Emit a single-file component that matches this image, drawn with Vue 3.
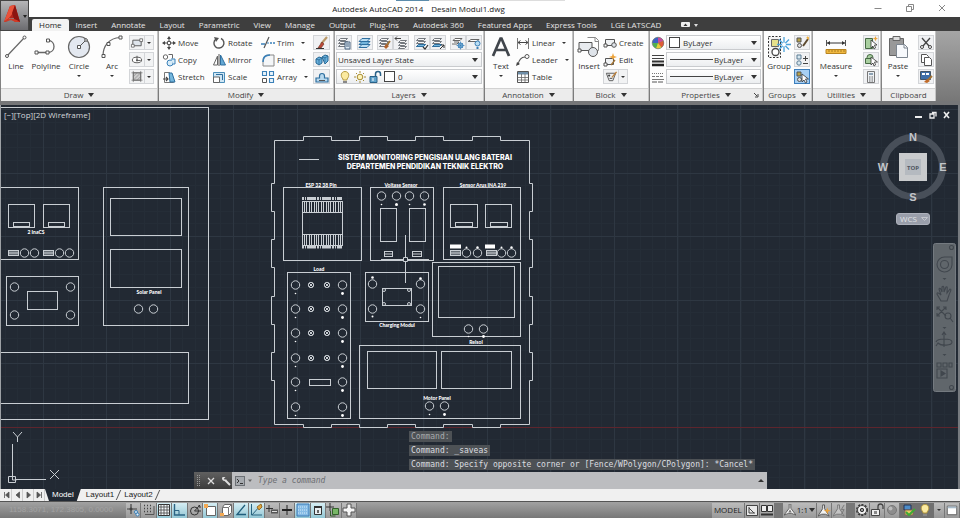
<script setup>
import { ref } from 'vue'

const menu = ['Insert', 'Annotate', 'Layout', 'Parametric', 'View', 'Manage', 'Output', 'Plug-ins', 'Autodesk 360', 'Featured Apps', 'Express Tools', 'LGE LATSCAD']

const stack = '<path d="M3.500 2.500h7l-2 2h-7zM3.500 5.500h7l-2 2h-7zM3.500 8.500h7l-2 2h-7z" fill="#f7f7f7" stroke="#646a70" stroke-width=".9"/>'
const group = '<path d="M2 2h4v4H2z" fill="#b8a24a" stroke="#555"/><circle cx="4.500" cy="9.500" r="2" fill="#ddd" stroke="#555"/>'

const icons = {
  line: '<path d="M3 21L20 3" stroke="#666" stroke-width="1.200"/><g fill="#fff" stroke="#555"><circle cx="3" cy="21" r="1.500"/><circle cx="20.500" cy="2.500" r="1.500"/></g>',
  polyline: '<path d="M2 17.500h12c8 0 8-12 0-12" fill="none" stroke="#666" stroke-width="1.300"/><g fill="#fff" stroke="#555"><path d="M1 16h3v3H1zM12 16h3v3h-3zM12.500 4h3v3h-3z"/></g>',
  circle: '<circle cx="12" cy="12" r="10.500" fill="#e3e8f0" stroke="#666" stroke-width="1.200"/><path d="M12 12l6.500-6.500" stroke="#555"/><g fill="#fff" stroke="#555"><path d="M10.500 10.500h3v3h-3z"/><circle cx="19" cy="5" r="1.300"/></g>',
  arc: '<path d="M3 21C3 11 9 3 20 2.500" fill="none" stroke="#666" stroke-width="1.200"/><g fill="#fff" stroke="#555"><path d="M2 19.500h3v3H2zM7 7.500h3v3H7zM19 1h3v3h-3z"/></g>',
  rect: '<path d="M2.500 4.500h9v6h-9z" fill="#dfe5ec" stroke="#555"/><path d="M1 9h3v3H1zM10 3h3v3h-3z" fill="#fff" stroke="#555" stroke-width=".8"/>',
  ellipse: '<ellipse cx="7" cy="7.500" rx="5" ry="3" fill="#fff" stroke="#555"/><path d="M7 3v5h4" fill="none" stroke="#555"/><path d="M6 7h2v2H6z" fill="#555"/>',
  hatch: '<path d="M3 3h8v8H3z" fill="#ccc" stroke="#777"/><path d="M3 7l4-4M3 11l8-8M7 11l4-4" stroke="#888" stroke-width=".7"/><path d="M1 3h12M3 1v12M1 11h12M11 1v12" stroke="#666" stroke-width=".7"/>',
  move: '<path d="M7 0l2 3H5zM7 14l2-3H5zM0 7l3-2v4zM14 7l-3-2v4z" fill="#444"/><path d="M7 3v8M3 7h8" stroke="#444"/><path d="M5.500 5.500h3v3h-3z" fill="#fff" stroke="#555"/>',
  rotate: '<path d="M4 3a5 5 0 1 0 5-.5" fill="none" stroke="#555" stroke-width="1.400"/><path d="M2 1l5 1-3 4z" fill="#555"/>',
  trim: '<path d="M0 8h4M9 7h2M12 7h2" stroke="#3a80b8" stroke-width="1.300"/><path d="M3 12L8 1" stroke="#555" stroke-width="1.200"/><path d="M6 7h2" stroke="#3a80b8"/>',
  copy: '<g fill="#fff" stroke="#666"><circle cx="3.500" cy="4" r="2.200"/><path d="M6.500 1.500h4v4"/></g><circle cx="8" cy="10" r="3" fill="#d8ecf8" stroke="#3a80b8"/><path d="M9 6h4v5h-2" fill="#d8ecf8" stroke="#3a80b8"/>',
  mirror: '<path d="M5.500 3v9h-4z" fill="#fff" stroke="#666"/><path d="M8.500 2v10h5z" fill="#64a8d4" stroke="#2e6f9f"/><path d="M7 1v12" stroke="#555"/>',
  fillet: '<path d="M2 13V8c0-4 2-6 6-6h5v11z" fill="#f4f6f8" stroke="#888"/><path d="M2 9c0-5 2-7 7-7" fill="none" stroke="#3a80b8" stroke-width="1.600"/>',
  stretch: '<path d="M2.500 2.500h5l4 10h-9z" fill="#fff" stroke="#777"/><path d="M7 3h3l3 9H8z" fill="#75b6dc" stroke="#2e6f9f"/><path d="M1 9h5M4 7l2 2-2 2" fill="none" stroke="#444" stroke-width="1.100"/>',
  scale: '<path d="M1.500 2.500h11v10h-11z" fill="#cfe6f4" stroke="#4a8db8"/><path d="M1.500 7h6v5.500h-6z" fill="#fff" stroke="#666"/><path d="M4 4.500h6.500V10" fill="none" stroke="#2e6f9f"/>',
  array: '<g fill="#e8f3fa" stroke="#3a80b8" stroke-width="1.100"><path d="M1.500 1.500h4v4h-4zM8.500 1.500h4v4h-4zM8.500 8.500h4v4h-4z"/></g><path d="M1.500 8.500h4v4h-4z" fill="#fff" stroke="#555"/>',
  erase: '<path d="M12 1L6 8" stroke="#b99868" stroke-width="2.200"/><path d="M7 6l2 2-3 4H3z" fill="#bd4938" stroke="#74392c" stroke-width=".7"/><path d="M1 12.500h8" stroke="#333"/>',
  explode: '<path d="M1 6l3-2 3 1v5l-3 2-3-2zM7 4l3-2 3 1v5l-3 3z" fill="#68b0dc" stroke="#286894"/><path d="M4 6v5M10 4v5M1 6l3 1 3-2M7 4l3 1 3-2" fill="none" stroke="#286894" stroke-width=".7"/>',
  offset: '<path d="M1 12h12V8H9.500V6a2.500 2.500 0 0 0-5 0v2H1z" fill="#b9d9ee" stroke="#2e6f9f" stroke-width="1.200"/><path d="M4 10.500h6" stroke="#555"/>',
  lprops: stack + '<path d="M8 6h5v7H8z" fill="#dce8f2" stroke="#4a6480"/><path d="M9 8h3M9 10h3" stroke="#4a6480"/>',
  liso: '<path d="M4 2.500h8l-3 3H1z" fill="#bcdff3" stroke="#2e6f9f"/><path d="M4 5.500h8l-3 3H1z" fill="#75b6dc" stroke="#2e6f9f"/><path d="M4 8.500h8l-3 3H1z" fill="#bcdff3" stroke="#2e6f9f"/>',
  lmatch: stack + '<path d="M12 5L9 9" stroke="#a47434" stroke-width="1.800"/><path d="M8 8l3 2-3 3-2-2z" fill="#b0622c"/>',
  lprev: '<path d="M6.500 4.500h6l-2 2h-6zM6.500 7.500h6l-2 2h-6zM6.500 10.500h6l-2 2h-6z" fill="#f7f7f7" stroke="#646a70" stroke-width=".9"/><path d="M1 2.500h6M3 .5l-2 2 2 2" stroke="#444" fill="none"/>',
  lblue: stack + '<path d="M3.500 8.500h7l-2 2h-7z" fill="#75b6dc" stroke="#2e6f9f"/><path d="M8 11l2 2 3-4" stroke="#333" fill="none" stroke-width="1.200"/>',
  lunset: stack + '<path d="M3.500 8.500h7l-2 2h-7z" fill="#75b6dc" stroke="#2e6f9f"/><path d="M9 13l4-4M10 9h3v3" stroke="#333" fill="none"/>',
  lfreeze: '<path d="M4 2.500h7l-2 2H2zM3 6h5l-2 2H1" fill="#fff" stroke="#666"/><circle cx="9.500" cy="9.500" r="2.500" fill="#cde8f8" stroke="#3a80b8"/><path d="M9.500 5.500v8M5.500 9.500h8M7 7l5 5M12 7l-5 5" stroke="#3a80b8" stroke-width=".7"/>',
  loff: '<path d="M4 3.500h8l-2 2H1z" fill="#fff" stroke="#666"/><circle cx="10.500" cy="7.500" r="2.500" fill="#b9dcf2" stroke="#3a80b8"/><path d="M9.500 11h2v2h-2z" fill="#3a80b8"/>',
  text: '<path d="M4 21L11.500 3.500h1L20 21M7 15h10" fill="none" stroke="#41464c" stroke-width="2.700"/>',
  linear: '<path d="M1.500 2v11M12.500 2v11" stroke="#777"/><path d="M2 6.500h10M4.500 4.500l-2.500 2 2.500 2M9.500 4.500l2.500 2-2.500 2" stroke="#444" fill="none"/>',
  leader: '<path d="M2 12c1-6 3-8 7-8" fill="none" stroke="#555" stroke-width="1.200"/><path d="M0 13l1-4 3 2z" fill="#444"/><circle cx="11" cy="3.500" r="2" fill="#fff" stroke="#555"/>',
  table: '<path d="M1.500 1.500h11v11h-11z" fill="#fff" stroke="#555"/><path d="M2 2h10v2.500H2z" fill="#6e8ea8"/><path d="M1.500 7.500h11M1.500 10h11M5.500 4v8M9 4v8" stroke="#666" stroke-width=".8"/>',
  insert: '<path d="M10.500 2.500h8l3 3v10h-7" fill="#fff" stroke="#888"/><path d="M18 2.500v4h4" fill="none" stroke="#888"/><path d="M2 7.500h13v8H2z" fill="#e8ebef" stroke="#555"/><circle cx="16" cy="17" r="4.500" fill="#dfe4ea" stroke="#555"/><path d="M1 14h3v3H1z" fill="#fff" stroke="#555"/>',
  create: '<path d="M2.500 3.500h9v6h-9z" fill="#f0f2f4" stroke="#555"/><circle cx="11" cy="9" r="2.300" fill="#dfe4ea" stroke="#555"/><path d="M1 8h3v3H1z" fill="#fff" stroke="#555"/>',
  edit: '<path d="M2.500 5.500h8v6h-8z" fill="#f0f2f4" stroke="#555"/><path d="M1 10h3v3H1z" fill="#fff" stroke="#555"/><path d="M12 7l-4 5" stroke="#a47434" stroke-width="1.300"/><path d="M10 0l1 3 3 1-3 1-1 2-1-2-3-1 3-1z" fill="#eda33a"/>',
  attr: '<path d="M2 3.500h10l-3 8H5z" fill="#eef0f2" stroke="#555"/><circle cx="5" cy="6" r="1.200" fill="#444"/><path d="M5.500 9h3" stroke="#444"/><path d="M13 2L8 8" stroke="#c08238" stroke-width="1.500"/>',
  wheel: '<circle cx="7" cy="7" r="5.800" fill="#50b050"/><path d="M7 7L1.200 7A5.800 5.800 0 0 1 7 1.200z" fill="#3d62c4"/><path d="M7 7V1.200A5.800 5.800 0 0 1 12.500 5z" fill="#c84c9c"/><path d="M7 7l5.500-2A5.800 5.800 0 0 1 10.500 11.600z" fill="#e05a38"/><path d="M7 7l3.500 4.600A5.800 5.800 0 0 1 5 12.500z" fill="#e8cc3c"/><circle cx="7" cy="7" r="5.800" fill="none" stroke="#777" stroke-width=".6"/>',
  weights: '<path d="M1 2.500h12M1 5.500h12" stroke="#444"/><path d="M1 8.500h12" stroke="#333" stroke-width="2"/><path d="M1 12h12" stroke="#222" stroke-width="2.500"/>',
  types: '<path d="M1 3.500h12" stroke="#777" stroke-dasharray="1 1"/><path d="M1 6.500h12" stroke="#777" stroke-dasharray="3 1"/><path d="M1 9.500h12" stroke="#777"/><path d="M1 12h12" stroke="#555" stroke-dasharray="5 1"/>',
  group: '<path d="M1.500 1.500h12v21h-12z" fill="#f4f4f4" stroke="#333" stroke-dasharray="2 1.500"/><path d="M4.500 4.500h7v7h-7z" fill="#e5e08a" stroke="#666"/><circle cx="8.500" cy="17" r="3.500" fill="#fff" stroke="#444" stroke-width="1.300"/><path d="M17 2v15M10 9.500h14M12 4.500l10 10M22 4.500l-10 10" stroke="#4ca4dc" stroke-width="1.300"/><circle cx="17" cy="9.500" r="2" fill="#fff"/>',
  gedit: group + '<path d="M13 3L8 10" stroke="#5c4a30" stroke-width="2"/><path d="M12 1l2 2" stroke="#f0b040" stroke-width="2"/>',
  gplus: '<path d="M2 2h4v4H2z" fill="#d8e8f0" stroke="#5c7c94"/><circle cx="4" cy="10" r="2.200" fill="#d8e8f0" stroke="#5c7c94"/><path d="M8 5.500h5M10.500 3v5M8 10.500h5" stroke="#444"/>',
  gsel: group + '<path d="M7 4v8l2-2 1.500 3 1.500-1-1.500-3h3z" fill="#fff" stroke="#333" stroke-width=".8"/>',
  measure: '<path d="M2.500 5v6M21.500 5v6" stroke="#555"/><path d="M3 8h18" stroke="#333"/><path d="M3 8l3-2v4zM21 8l-3-2v4z" fill="#333"/><path d="M2 14.500h20v4H2z" fill="#f0b840" stroke="#b88420"/><path d="M5 15v2M8 15v2M11 15v2M14 15v2M17 15v2M20 15v2" stroke="#8c6414" stroke-width=".7"/>',
  qselect: '<path d="M1.500 2.500h7v10h-7z" fill="#a9cfa0" stroke="#476a44"/><path d="M7 4v8l2-2 1 3 1.500-1-1-3h2.500z" fill="#fff" stroke="#333" stroke-width=".8"/><path d="M11.500 0l.8 2 2 .5-2 .8-.8 2-.8-2-2-.8 2-.5z" fill="#eda33a"/>',
  selall: '<circle cx="6" cy="4.500" r="3" fill="#a9cfa0" stroke="#476a44"/><path d="M1.500 5.500h7v5h-7z" fill="#a9cfa0" stroke="#476a44"/><path d="M7 4v8l2-2 1 3 1.500-1-1-3h3z" fill="#fff" stroke="#333" stroke-width=".8"/>',
  calc: '<path d="M3.500 1.500h7v11h-7z" fill="#eef1f4" stroke="#777"/><path d="M5 3h4v2H5z" fill="#8da2b4"/><path d="M5 7h4M5 9h4M5 11h4" stroke="#666" stroke-dasharray="1 .5"/>',
  paste: '<path d="M3.500 3.500h14v17h-14z" fill="#999" stroke="#666"/><path d="M7 1.500h7v4H7z" fill="#ddd" stroke="#666"/><path d="M10.500 9.500h8l3 3v10h-11z" fill="#f7f9fc" stroke="#7d8690"/><path d="M18 9.500v3.500h3.500" fill="none" stroke="#7d8690"/>',
  cut: '<path d="M3 2l7 8M11 2L4 10" stroke="#444" stroke-width="1.300"/><g fill="#fff" stroke="#444"><circle cx="3" cy="11" r="1.500"/><circle cx="11" cy="11" r="1.500"/></g>',
  copyclip: '<path d="M2.500 1.500h5l2 2v6h-7z" fill="#fff" stroke="#555"/><path d="M5.500 4.500h5l2 2v6h-7z" fill="#fff" stroke="#555"/>',
  matchp: '<path d="M1.500 1.500h10v8h-10z" fill="#3e6ea8" stroke="#456"/><path d="M3 3h3v2H3zM7 3h3v2H7z" fill="#fff"/><path d="M13 6l-4 4" stroke="#a47434" stroke-width="2"/><path d="M8 9l3 2-3 2-3-1z" fill="#c06a28"/>',
  bulb: '<path d="M5 9C2 6 3 1.500 7 1.500S12 6 9 9v1H5z" fill="#fbeaa0" stroke="#b59a40"/><path d="M5 11h4v2H5z" fill="#888"/>',
  sun: '<circle cx="7" cy="7" r="2.800" fill="#fff4b8" stroke="#a78c34"/><path d="M7 1v2M7 11v2M1 7h2M11 7h2M3 3l1 1M10 10l1 1M11 3l-1 1M3 11l1-1" stroke="#a78c34"/>',
  unlock: '<path d="M2 6.500h7v6H2z" fill="#62a4cc" stroke="#2a6288"/><path d="M7.500 6V4a2.500 2.500 0 0 1 5 0v2" fill="none" stroke="#2a6288" stroke-width="1.500"/><path d="M5 8v3" stroke="#fff"/>',
  infer: '<path d="M5 1v10M1 6h10" stroke="#444" stroke-width="1.200"/><circle cx="5" cy="6" r="1.500" fill="#444"/><g fill="#e5f0f8" stroke="#3a80b8"><circle cx="10" cy="9" r="1.500"/><circle cx="11.500" cy="11.500" r="1.500"/></g>',
  snap: '<path d="M2 2.500h7M2 5.500h7M2 8.500h7" stroke="#444" stroke-dasharray="1 2" stroke-width="1.300"/><path d="M3 11.500h9V3" fill="none" stroke="#555"/>',
  grid: '<path d="M1.500 1.500h11v11h-11z" fill="#f4f8fb" stroke="#333"/><path d="M1 4h12M1 7h12M1 10h12M4 1v12M7 1v12M10 1v12" stroke="#444" stroke-width=".8"/>',
  ortho: '<path d="M2.500 1v11H13" fill="none" stroke="#2b6484" stroke-width="1.400"/><path d="M3 7.500h4V12" fill="none" stroke="#2b6484"/>',
  polar: '<circle cx="6.500" cy="8" r="4" fill="none" stroke="#333"/><path d="M6.500 8L12 2M6.500 8H13M10 3h2v2" fill="none" stroke="#333"/>',
  osnap: '<path d="M3.500 3.500h9v9h-9z" fill="#fff" stroke="#666"/><path d="M1 1h4v4H1z" fill="#f3a954"/>',
  osnap3: '<path d="M3.500 4.500l2-3h7v8l-3 3h-6z" fill="#fff" stroke="#666"/><path d="M9.500 12.500v-8l3-3M3.500 4.500h6" fill="none" stroke="#777"/><path d="M1 10h4v3H1z" fill="#f3a954"/>',
  track: '<path d="M11 2L3 11.500h9" fill="none" stroke="#205e7c" stroke-width="1.300"/>',
  ducs: '<path d="M2.500 1v11H13M3 12l8-9" fill="none" stroke="#2a6580"/><path d="M8 4l4-3 1 3-3 3z" fill="#e2a53c" stroke="#976c28"/>',
  dyn: '<path d="M4 2v7M1 5.500h7" stroke="#333"/><path d="M6 6.500h7v4H6z" fill="#555"/><path d="M7 8.500h5" stroke="#ddd"/>',
  lwt: '<path d="M7 2v10" stroke="#222"/><path d="M2 7h10" stroke="#222" stroke-width="2"/>',
  tpy: '<path d="M1 1h12v12H1z" fill="#86bce6" stroke="#3a78b4"/><path d="M2 4h10M2 7h10M2 10h10" stroke="#d6ebfa" stroke-dasharray="1 1"/>',
  qp: '<path d="M3.500 3.500h7v8h-7z" fill="#e8eef2" stroke="#333"/><path d="M3 3h8v2H3z" fill="#333"/><path d="M6 7h2v3H6z" fill="#666"/>',
  sc: '<path d="M4 0v8M0 4h8" stroke="#333"/><path d="M6.500 5.500h6v6h-6z" fill="#77b766" stroke="#34612c"/><path d="M4.500 8v5h5" fill="none" stroke="#34612c"/>',
  am: '<path d="M5 1h4v4h4v4H9v4H5V9H1V5h4z" fill="#f5f5f5" stroke="#555"/>',
  paper: '<path d="M1.500 2.500h11v10h-11z" fill="#e8e8e8" stroke="#444"/><path d="M4 4v6h6M4 5l5 5" stroke="#444" fill="none"/>',
  views: '<path d="M1.500 2.500h5v6h-5zM7.500 2.500h5v6h-5z" fill="#eee" stroke="#333"/><path d="M1 11.500h12" stroke="#333" stroke-width="2"/>',
  scaleA: '<path d="M6 0h2v5l6 8-5-2H5l-5 2 6-8z" fill="#f3f3f3" stroke="#555"/><path d="M7 6l2 4H5z" fill="#777"/>',
  scaleB: '<path d="M5 1h2v4l5 8-4-2H4l-4 2 5-8z" fill="#f3f3f3" stroke="#555"/><path d="M10 4l1 2.500 3 .5-3 1-1 3-1-3-3-1 3-.5z" fill="#e9a13a"/>',
  scaleC: '<path d="M5 1h2v4l5 8-4-2H4l-4 2 5-8z" fill="#c4c4c4" stroke="#777"/><path d="M12 1L9 6h3l-3 5" stroke="#777" fill="none"/>',
  gear: '<circle cx="7" cy="7" r="5" fill="#f2f2f2" stroke="#333" stroke-width="2" stroke-dasharray="2 1.200"/><circle cx="7" cy="7" r="4.500" fill="#f2f2f2" stroke="#444"/><circle cx="7" cy="7" r="1.700" fill="#999" stroke="#333"/>',
  lockui: '<path d="M1.500 6.500h8v6h-8z" fill="#eee" stroke="#444"/><path d="M8 6V3.500a2.500 2.500 0 0 1 5 0V6" fill="none" stroke="#444" stroke-width="1.300"/><path d="M4 8h3v3H4z" fill="#888"/>',
  ball: '<circle cx="7" cy="7" r="4.500" fill="#8d8d8d" stroke="#777"/><circle cx="5.500" cy="5.500" r="2" fill="#bbb"/>',
  hw: '<path d="M2 2h7v5H2z" fill="#4c8cc8" stroke="#235"/><path d="M3 7h8v5H3z" fill="#e5cd62" stroke="#865"/><path d="M4 9l3 3 6-6" fill="none" stroke="#3eaa36" stroke-width="2"/>',
  clean: '<path d="M1.500 2.500h11v10h-11z" fill="#fff" stroke="#555"/><path d="M2 3h10v2H2z" fill="#a8bccb"/>',
}

const drawBig = [
  { icon: 'line', text: 'Line', cls: 'w30' },
  { icon: 'polyline', text: 'Polyline', cls: 'w30' },
  { icon: 'circle', text: 'Circle', cls: 'w36', more: true },
  { icon: 'arc', text: 'Arc', cls: 'w30', more: true },
]
const modify = [
  ['move', 'Move'], ['rotate', 'Rotate'], ['trim', 'Trim', true], ['erase', ''],
  ['copy', 'Copy'], ['mirror', 'Mirror'], ['fillet', 'Fillet', true], ['explode', ''],
  ['stretch', 'Stretch'], ['scale', 'Scale'], ['array', 'Array', true], ['offset', ''],
]
const layerGroups = [['lprops'], ['liso'], ['lmatch', 'lprev'], ['lblue', 'lunset'], ['lfreeze', 'loff']]
const toggles = [
  ['infer', 0], ['snap', 0], ['grid', 1], ['ortho', 1], ['polar', 0], ['osnap', 1], ['osnap3', 0], ['track', 1],
  ['ducs', 1], ['dyn', 0], ['lwt', 0], ['tpy', 1], ['qp', 1], ['sc', 0], ['am', 0],
]

const command = ref('')
const sheets = ['Model', 'Layout1', 'Layout2']

const range = (n, f) => Array.from({ length: n }, (_, i) => f(i))
const minorX = range(80, i => Math.round(4.5 + i * 12.7) + 0.5)
const minorY = range(34, i => Math.round(109 + i * 12.7) + 0.5)
const majorX = range(16, i => Math.round(43 + i * 63.4) + 0.5)
const majorY = range(6, i => Math.round(109 + i * 63.5) + 0.5)
const pins = range(16, i => 304.5 + Math.round(i * 2.4))

const rects = [
  [-5, 187, 83, 72], [8, 204, 26, 23], [43, 204, 26, 23], [13, 222, 16, 4], [48, 222, 16, 4],
  [6, 276, 72, 49], [27, 291, 30, 18], [103, 187, 85, 138], [110, 198, 71, 37], [110, 249, 71, 38],
  [-5, 352, 193, 51], [-5, 107, 213, 312],
  [283, 187, 78, 73], [302, 201, 40, 44], [302, 201, 40, 11], [302, 234, 40, 11],
  [370, 187, 63, 73], [380, 208, 16, 33], [409, 208, 16, 33], [384, 251, 8, 5], [412, 251, 9, 5],
  [443, 187, 77, 72], [450, 204, 27, 23], [485, 204, 26, 23], [455, 222, 17, 4], [490, 222, 17, 4],
  [287, 272, 63, 146], [309, 379, 21, 6],
  [365, 272, 63, 49], [382, 288, 29, 17],
  [432, 262, 88, 74], [438, 266, 76, 51],
  [359, 345, 161, 73], [367, 351, 69, 37], [441, 351, 70, 37],
]
const shaded = [[8, 250], [43, 250], [450, 250], [486, 250]]
const rowsY = [285, 309, 333, 358, 382, 407]
const rings = [
  [24, 253], [34, 253], [59, 253], [69, 253], [14, 287], [70, 287], [14, 315], [70, 315], [138, 309], [153, 309],
  [381, 196], [396, 196], [409, 196], [424, 196], [466, 253], [477, 253], [501, 253], [511, 253],
  [372, 284], [420, 284], [372, 309], [420, 309], [468, 329], [483, 329], [429, 406], [444, 406],
  ...rowsY.flatMap(y => [[295, y], [342, y]]),
]
const lamps = rowsY.slice(0, 4).flatMap(y => [[311, y], [327, y]])
const dots = [
  [396, 204, 1.5], [381, 204, 0.8], [409, 204, 0.8], [424, 204, 1.3], [466, 247, 1], [477, 247, 1.2], [501, 247, 1], [511, 247, 1.2],
  [372, 277, 1.3], [420, 278, 1.3], [372, 316, 1], [420, 317, 0.8], [468, 336, 0.8], [483, 336, 1.4],
  [429, 414, 0.8], [444, 414, 1.4], ...rowsY.flatMap(y => [[295, y + 8, 0.8], [342, y + 8, 1.4]]),
]
const labels = [
  [36, 234, '2 InaCS'], [149, 294, 'Solar Panel'], [321, 187, 'ESP 32 38 Pin'], [401, 187, 'Voltase Sensor'],
  [483, 187, 'Sensor Arus INA 219'], [319, 271, 'Load'], [397, 327, 'Charging Modul'], [476, 344, 'Relsol'], [437, 400, 'Motor Panel'],
]
const outline = 'M274.500 140.500H303.500V136.500H331.500V140.500H359.500V136.500H387.500V140.500H415.500V136.500H443.500V140.500H472.500V136.500H500.500V140.500H529.500V183.500H532.500V211.500H529.500V239.500H532.500V267.500H529.500V296.500H532.500V324.500H529.500V352.500H532.500V380.500H529.500V424.500H500.500V427.500H472.500V424.500H443.500V427.500H415.500V424.500H387.500V427.500H359.500V424.500H331.500V427.500H303.500V424.500H274.500V380.500H271.500V352.500H274.500V324.500H271.500V296.500H274.500V267.500H271.500V239.500H274.500V211.500H271.500V183.500H274.500Z'
</script>

<template>
  <div class="window">
    <header class="title">
      <span class="strip"></span>
      <h1><span>Autodesk AutoCAD 2014</span><span>Desain Modul1.dwg</span></h1>
      <div class="winctl">
        <button aria-label="Minimize"><svg width="10" height="10" viewBox="0 0 10 10"><path d="M1.500 5.500h7" /></svg></button>
        <button aria-label="Restore"><svg width="10" height="10" viewBox="0 0 10 10"><path d="M1.500 3.500h5v5h-5zM3.500 3V1.500h5v5H7" /></svg></button>
        <button aria-label="Close"><svg width="10" height="10" viewBox="0 0 10 10"><path d="M2 2l6 6M8 2l-6 6" /></svg></button>
      </div>
      <button class="app" aria-label="Application menu">
        <svg width="28" height="28" viewBox="0 0 28 28">
          <path d="M3 20L9 4l5-1 5 17h-5l-1-4-5 0-1 3z" fill="#b3241a" />
          <path d="M9 4l5-1-2 8-4 5-5 4z" fill="#e8523a" />
          <path d="M14 3l5 17h-5l-3-9z" fill="#8c1410" />
          <path d="M3 20c3-4 8-5 16 0h-5c-3-2-5-2-7-1z" fill="#d13a26" />
          <path d="M22 13h4l-2 3z" fill="#222" />
        </svg>
      </button>
    </header>

    <nav class="menu">
      <a href="#home" class="on">Home</a>
      <a v-for="m in menu" :key="m" href="#tab">{{ m }}</a>
      <button class="min" aria-label="Minimize ribbon">
        <svg width="18" height="8" viewBox="0 0 18 8"><rect x="0" y="1" width="9" height="5" rx="1" fill="#eee" /><path d="M2.500 5L4.500 2.500 6.500 5z" fill="#333" /><path d="M13 3h4l-2 3z" fill="#ddd" /></svg>
      </button>
    </nav>

    <div class="ribbon">
      <section class="panel p-draw">
        <div class="body">
          <button v-for="b in drawBig" :key="b.text" class="big" :class="b.cls">
            <svg width="24" height="24" viewBox="0 0 24 24" v-html="icons[b.icon]" />
            <span>{{ b.text }}</span><i v-if="b.more" class="dn"></i>
          </button>
          <div class="stack splits">
            <button v-for="n in ['rect', 'ellipse', 'hatch']" :key="n" class="split" :aria-label="n">
              <svg width="14" height="14" viewBox="0 0 14 14" v-html="icons[n]" /><span class="cut"><i class="dn"></i></span>
            </button>
          </div>
        </div>
        <footer>Draw <i class="tri"></i></footer>
      </section>

      <section class="panel p-modify">
        <div class="body">
          <div class="tools">
            <button v-for="[ic, text, more] in modify" :key="ic" class="tool" :class="{ boxed: !text }" :aria-label="text || ic">
              <svg width="14" height="14" viewBox="0 0 14 14" v-html="icons[ic]" /><span v-if="text">{{ text }}</span><i v-if="more" class="dn"></i>
            </button>
          </div>
        </div>
        <footer>Modify <i class="tri"></i></footer>
      </section>

      <section class="panel p-layers">
        <div class="body">
          <div class="stack wide">
            <div class="lrow">
              <div v-for="g in layerGroups" :key="g[0]" class="lgroup">
                <button v-for="n in g" :key="n" class="boxed" :aria-label="n"><svg width="14" height="14" viewBox="0 0 14 14" v-html="icons[n]" /></button>
              </div>
            </div>
            <div class="combo"><select aria-label="Layer state"><option>Unsaved Layer State</option></select><i class="tri"></i></div>
            <div class="combo">
              <svg v-for="n in ['bulb', 'sun', 'unlock']" :key="n" width="14" height="14" viewBox="0 0 14 14" v-html="icons[n]" />
              <b class="swatch"></b><select aria-label="Layer"><option>0</option></select><i class="tri"></i>
            </div>
          </div>
        </div>
        <footer>Layers <i class="tri"></i></footer>
      </section>

      <section class="panel p-anno">
        <div class="body">
          <button class="big w30"><svg width="24" height="24" viewBox="0 0 24 24" v-html="icons.text" /><span>Text</span><i class="dn"></i></button>
          <div class="stack">
            <button class="tool"><svg width="14" height="14" viewBox="0 0 14 14" v-html="icons.linear" /><span>Linear</span><i class="dn"></i></button>
            <button class="tool"><svg width="14" height="14" viewBox="0 0 14 14" v-html="icons.leader" /><span>Leader</span><i class="dn"></i></button>
            <button class="tool"><svg width="14" height="14" viewBox="0 0 14 14" v-html="icons.table" /><span>Table</span></button>
          </div>
        </div>
        <footer>Annotation <i class="tri"></i></footer>
      </section>

      <section class="panel p-block">
        <div class="body">
          <button class="big w28"><svg width="24" height="24" viewBox="0 0 24 24" v-html="icons.insert" /><span>Insert</span></button>
          <div class="stack">
            <button class="tool"><svg width="14" height="14" viewBox="0 0 14 14" v-html="icons.create" /><span>Create</span></button>
            <button class="tool"><svg width="14" height="14" viewBox="0 0 14 14" v-html="icons.edit" /><span>Edit</span></button>
            <button class="split" aria-label="Attributes"><svg width="14" height="14" viewBox="0 0 14 14" v-html="icons.attr" /><span class="cut"><i class="dn"></i></span></button>
          </div>
        </div>
        <footer>Block <i class="tri"></i></footer>
      </section>

      <section class="panel p-props">
        <div class="body">
          <div class="stack wide">
            <div class="prow"><svg width="14" height="14" viewBox="0 0 14 14" v-html="icons.wheel" />
              <div class="combo"><b class="swatch"></b><select aria-label="Color"><option>ByLayer</option></select><i class="tri"></i></div></div>
            <div class="prow"><svg width="14" height="14" viewBox="0 0 14 14" v-html="icons.weights" />
              <div class="combo"><b class="rule"></b><select aria-label="Lineweight" class="short"><option>ByLayer</option></select><i class="tri"></i></div></div>
            <div class="prow"><svg width="14" height="14" viewBox="0 0 14 14" v-html="icons.types" />
              <div class="combo"><b class="rule"></b><select aria-label="Linetype" class="short"><option>ByLayer</option></select><i class="tri"></i></div></div>
          </div>
        </div>
        <footer>Properties <i class="tri"></i><svg class="launch" width="6" height="6" viewBox="0 0 6 6"><path d="M1 1l3 3M5 2v3H2" fill="none" stroke="#444" /></svg></footer>
      </section>

      <section class="panel p-groups">
        <div class="body">
          <button class="big w28"><svg width="24" height="24" viewBox="0 0 24 24" v-html="icons.group" /><span>Group</span></button>
          <div class="stack end">
            <button class="boxed" aria-label="Group edit"><svg width="14" height="14" viewBox="0 0 14 14" v-html="icons.gedit" /></button>
            <button class="boxed" aria-label="Ungroup"><svg width="14" height="14" viewBox="0 0 14 14" v-html="icons.gplus" /></button>
            <button class="boxed active" aria-label="Group selection"><svg width="14" height="14" viewBox="0 0 14 14" v-html="icons.gsel" /></button>
          </div>
        </div>
        <footer>Groups <i class="tri"></i></footer>
      </section>

      <section class="panel p-utils">
        <div class="body">
          <button class="big w44"><svg width="24" height="24" viewBox="0 0 24 24" v-html="icons.measure" /><span>Measure</span><i class="dn"></i></button>
          <div class="stack end">
            <button v-for="n in ['qselect', 'selall', 'calc']" :key="n" class="boxed" :aria-label="n"><svg width="14" height="14" viewBox="0 0 14 14" v-html="icons[n]" /></button>
          </div>
        </div>
        <footer>Utilities <i class="tri"></i></footer>
      </section>

      <section class="panel p-clip">
        <div class="body">
          <button class="big w30"><svg width="24" height="24" viewBox="0 0 24 24" v-html="icons.paste" /><span>Paste</span><i class="dn"></i></button>
          <div class="stack end">
            <button v-for="n in ['cut', 'copyclip', 'matchp']" :key="n" class="boxed" :aria-label="n"><svg width="14" height="14" viewBox="0 0 14 14" v-html="icons[n]" /></button>
          </div>
        </div>
        <footer>Clipboard</footer>
      </section>
    </div>

    <main class="view">
      <svg class="model">
        <g transform="translate(-1 -105)">
          <g stroke="#252d37"><line v-for="x in minorX" :key="x" :x1="x" :x2="x" y1="105" y2="1000" /><line v-for="y in minorY" :key="y" x1="0" x2="2000" :y1="y" :y2="y" /></g>
          <g stroke="#2e3742"><line v-for="x in majorX" :key="x" :x1="x" :x2="x" y1="105" y2="1000" /><line v-for="y in majorY" :key="y" x1="0" x2="2000" :y1="y" :y2="y" /></g>
          <path d="M0 427.500H2000" stroke="#5e252d" />
          <g class="cad">
            <path :d="outline" />
            <rect v-for="(r, i) in rects" :key="i" :x="r[0] + 0.5" :y="r[1] + 0.5" :width="r[2]" :height="r[3]" />
            <g v-for="(s, i) in shaded" :key="'s' + i"><rect class="shade" :x="s[0] + 0.5" :y="s[1] + 0.5" width="10" height="5" /><path :d="`M${s[0]} ${s[1] + 3}h11`" /></g>
            <circle v-for="(c, i) in rings" :key="'c' + i" :cx="c[0] + 0.5" :cy="c[1]" r="4.200" />
            <g v-for="(l, i) in lamps" :key="'l' + i"><circle :cx="l[0]" :cy="l[1]" r="2.700" /><path :d="`M${l[0] - 2} ${l[1] - 2}l4 4m0 -4l-4 4`" /></g>
            <path v-for="x in pins" :key="x" :d="`M${x} 201v11M${x} 234v11`" />
            <path d="M302 198.500h40M302 247h40" class="marks" />
            <path d="M450 246.500h11M485 246.500h10" class="blob" />
            <path d="M299 159.500h20M384 254h8M413 254h8M381 259.500h48M405.500 235v48" />
            <path d="M403.500 257.500h4v4h-4z" fill="#222933" />
            <circle v-for="(c, i) in [[384, 290], [409, 290], [384, 304], [409, 304]]" :key="'k' + i" :cx="c[0]" :cy="c[1]" r="1.500" />
            <path d="M12.500 444v32M16 479.500h30M8.500 476.500h7v6h-7zM12.500 476v4h4" />
            <path d="M13 432l4.500 5 4.500-5M17.500 437v5M50 470l9 9M59 470l-9 9" />
          </g>
          <circle v-for="(d, i) in dots" :key="'d' + i" :cx="d[0] + 0.5" :cy="d[1] + 0.5" :r="d[2]" fill="#fff" />
          <g class="caption"><text x="425" y="160">SISTEM MONITORING PENGISIAN ULANG BATERAI</text><text x="425" y="169">DEPARTEMEN PENDIDIKAN TEKNIK ELEKTRO</text></g>
          <g class="tags"><text v-for="l in labels" :key="l[2]" :x="l[0]" :y="l[1]">{{ l[2] }}</text></g>
        </g>
      </svg>

      <span class="viewlabel">[−][Top][2D Wireframe]</span>

      <div class="right">
        <div class="mdi">
          <button aria-label="Minimize drawing"><svg width="8" height="8" viewBox="0 0 8 8"><path d="M0 6h7" stroke-width="2" /></svg></button>
          <button aria-label="Restore drawing"><svg width="8" height="8" viewBox="0 0 8 8"><path d="M1 3h4v4H1zM3 1.500h4v4" stroke-width="1.300" /></svg></button>
          <button aria-label="Close drawing"><svg width="8" height="8" viewBox="0 0 8 8"><path d="M1 1l5 6M6 1L1 7" stroke-width="1.600" /></svg></button>
        </div>
        <svg class="cube" width="72" height="76" viewBox="0 0 72 76">
          <circle cx="36" cy="38" r="29.500" fill="none" stroke="#484f59" stroke-width="7" />
          <rect x="22" y="24" width="28" height="28" fill="#c9cbcd" /><rect x="28" y="30" width="16" height="16" fill="#b5bac0" />
          <text x="36" y="41" class="top">TOP</text>
          <g class="dir"><text x="36" y="12">N</text><text x="66" y="42">E</text><text x="36" y="72">S</text><text x="6" y="42">W</text></g>
        </svg>
        <button class="wcs">WCS <svg width="7" height="5" viewBox="0 0 7 5"><path d="M.5.5h6l-3 3z" fill="none" stroke="#c2c5cc" /></svg></button>
        <svg class="navbar" width="23" height="149" viewBox="0 0 23 149">
          <rect x=".5" y=".5" width="22" height="148" rx="2" fill="#60666b" stroke="#747a80" />
          <g fill="none" stroke="#41474e" stroke-width="1.100">
            <circle cx="18.500" cy="4.500" r="2" /><circle cx="18.500" cy="144.500" r="2" />
            <path d="M19 14v8a7.500 7.500 0 1 1-7.500-8z" /><circle cx="11.500" cy="21.500" r="4" />
            <path d="M8 58l-4-7c0-2 2-1 4 1l-2-6c1-2 2 0 3 3V44c2-2 2 1 2 5l2-5c2-1 1 2 1 6l3-4c2 0 0 3-1 6l-2 6z" />
            <path d="M4 64l9 9M13 64l-9 9M4 67v-3h3M10 64h3v3M4 70v3h3" /><circle cx="15" cy="73" r="3" /><path d="M17 75l3 4" />
            <path d="M11 90v14M9 92l2-3 2 3M3 99c1-4 16-4 16 0s-11 4-14 1M3 103l2-3 3 2" />
            <path d="M4 120h4v4H4zM10 120h4v4h-4zM16 120h3v4h-3zM4 126h10v9H4z" /><path d="M8 128l4 2.500L8 133z" fill="#41474e" />
          </g>
          <g fill="#41474e"><path d="M9.500 35h4l-2 2zM9.500 84h4l-2 2zM9.500 111h4l-2 2z" /></g>
        </svg>
      </div>

      <div class="cmd">
        <div class="history"><p>Command:</p><p class="lit">Command: _saveas</p><p class="lit">Command: Specify opposite corner or [Fence/WPolygon/CPolygon]: *Cancel*</p></div>
        <div class="cmdline">
          <div class="grip">
            <svg width="5" height="14" viewBox="0 0 5 14"><path d="M1.500 1v12M3.500 1v12" stroke="#999" stroke-dasharray="1 1" /></svg>
            <button aria-label="Close command line"><svg width="8" height="8" viewBox="0 0 8 8"><path d="M1 1l6 6M7 1L1 7" stroke="#ddd" stroke-width="1.300" /></svg></button>
            <button aria-label="Customize"><svg width="10" height="10" viewBox="0 0 10 10"><path d="M4 4l5 5" stroke="#ddd" stroke-width="2" /><path d="M4.500 1L3 2.500l1 1.500 1.500-.5L5.500 4a2.500 2.500 0 0 1-4 0C.5 3 1 1 2 1z" fill="#ddd" /></svg></button>
          </div>
          <label class="entry">
            <svg width="18" height="10" viewBox="0 0 18 10"><rect x=".5" y=".5" width="9" height="9" fill="#a5a9ae" stroke="#6c7075" /><path d="M2 3l2 2-2 2M5 7.500h3" fill="none" stroke="#333" /><path d="M13 3.500h4l-2 2.500z" fill="#666" /></svg>
            <input v-model="command" placeholder="Type a command" aria-label="Command" />
            <i class="up"></i>
          </label>
        </div>
      </div>
    </main>

    <div class="sheets">
      <button v-for="(d, i) in ['M2.500 1v6M7 1L3.500 4 7 7z', 'M6.500 1L3 4l3.500 3z', 'M3 1l3.500 3L3 7z', 'M6.500 1v6M2 1l3.500 3L2 7z']" :key="i" class="step" :aria-label="'Sheet step ' + (i + 1)">
        <svg width="9" height="8" viewBox="0 0 9 8"><path :d="d" fill="#555" stroke="#555" stroke-width=".8" /></svg>
      </button>
      <a v-for="(s, i) in sheets" :key="s" href="#sheet" :class="['sheet', { on: i === 0 }]">{{ s }}</a>
    </div>

    <footer class="status">
      <span class="coords">1158.3071, 172.3805, 0.0000</span>
      <div class="toggles">
        <button v-for="[n, on] in toggles" :key="n" class="tog" :class="{ lit: on }" :aria-label="n"><svg width="14" height="14" viewBox="0 0 14 14" v-html="icons[n]" /></button>
      </div>
      <div class="tray">
        <button class="tog model-btn">MODEL</button>
        <button v-for="n in ['paper', 'views']" :key="n" class="tog" :aria-label="n"><svg width="14" height="14" viewBox="0 0 14 14" v-html="icons[n]" /></button>
        <span class="sep"></span>
        <button class="tog ratio"><svg width="12" height="12" viewBox="0 0 14 14" v-html="icons.scaleA" />1:1<i class="tri"></i></button>
        <button v-for="n in ['scaleB', 'scaleC']" :key="n" class="tog" :aria-label="n"><svg width="13" height="13" viewBox="0 0 14 14" v-html="icons[n]" /></button>
        <span class="sep"></span>
        <button v-for="n in ['gear', 'lockui', 'ball']" :key="n" class="tog" :aria-label="n"><svg width="14" height="14" viewBox="0 0 14 14" v-html="icons[n]" /></button>
        <span class="pair"><svg width="14" height="14" viewBox="0 0 14 14" v-html="icons.hw" /><svg width="14" height="14" viewBox="0 0 14 14" v-html="icons.bulb" /></span>
        <button class="tog slim" aria-label="Status menu"><i class="dn"></i></button>
        <button class="tog" aria-label="Clean screen"><svg width="12" height="12" viewBox="0 0 14 14" v-html="icons.clean" /></button>
      </div>
    </footer>
  </div>
</template>

<style>
body { margin: 0; background: #888; }
</style>

<style scoped>
.window { display: flex; flex-direction: column; height: 100vh; overflow: hidden; font: 8px/10px "Open Sans", "Noto Sans", sans-serif; color: #333; }
* { box-sizing: border-box; }
button { font: inherit; color: inherit; padding: 0; border: 0; background: none; }
a { color: inherit; text-decoration: none; }
svg { display: block; flex: none; }
i { display: block; flex: none; }
.dn { border: 2px solid transparent; border-top-color: #333; border-bottom: 0; }
.tri { border: 3px solid transparent; border-top: 4px solid #333; border-bottom: 0; }

.title { position: relative; flex: none; height: 17px; background: #fff; display: flex; align-items: center; justify-content: center; }
.title h1 { display: flex; gap: 8px; margin: 0 123px 0 0; font-size: 8px; line-height: 15px; font-weight: 400; color: #222; }
.strip { position: absolute; top: 0; left: 396px; width: 169px; height: 1px; background: linear-gradient(90deg, #5c8cab 33px, #ddd 33px); }
.winctl { position: absolute; right: 13px; top: 3px; display: flex; gap: 22px; }
.winctl path { fill: none; stroke: #888; }
.app { position: absolute; left: 0; top: 0; z-index: 2; width: 29px; height: 31px; border: 1px solid #444; background: linear-gradient(#b5b5b7, #6c6c70); }

.menu { flex: none; height: 14px; background: #3e3e3e; display: flex; align-items: flex-end; padding-left: 32px; color: #e4e4e4; }
.menu a { padding: 0 7px; line-height: 12px; white-space: nowrap; }
.menu .on { background: #f2f2f2; color: #222; border-radius: 2px 2px 0 0; }
.menu .min { margin-left: 13px; height: 12px; }

.ribbon { flex: none; display: flex; gap: 1px; padding-left: 1px; background: linear-gradient(#a5a5a5, #777); border-bottom: 4px solid #757678; overflow: hidden; }
.panel { flex: none; display: flex; flex-direction: column; background: #fdfdfd; border-right: 1px solid #c4c4c4; }
.panel footer { position: relative; height: 13px; display: flex; gap: 5px; align-items: center; justify-content: center; background: #ececec; border-top: 1px solid #d2d2d2; color: #444; }
.body { flex: 1; display: flex; padding: 4px 1px; height: 57px; }
.p-draw { width: 157px; }
.p-modify { width: 175px; }
.p-layers { width: 149px; }
.p-anno { width: 88px; }
.p-block { width: 75px; }
.p-props { width: 113px; }
.p-groups { width: 48px; }
.p-utils { width: 68px; }
.p-clip { width: 54px; }
.stack { display: flex; flex-direction: column; gap: 2px; }
.wide { flex: 1; }
.end { margin-left: auto; }
.p-draw .body { padding-left: 0; }
.splits { margin-left: auto; margin-right: 2px; }
.big { display: flex; flex-direction: column; align-items: center; flex: none; height: 49px; }
.big span { line-height: 14px; }
.big .dn { margin-top: 2px; }
.w28 { width: 28px; }
.w30 { width: 30px; }
.w36 { width: 36px; }
.w44 { width: 44px; }
.tool { display: flex; align-items: center; gap: 2px; height: 15px; white-space: nowrap; }
.tool .dn { margin-left: 5px; }
.boxed { height: 15px; min-width: 16px; display: flex; align-items: center; justify-content: center; background: #f0f1f3; border: 1px solid #d3d5d8; }
.boxed.active { background: #a8d0f4; border-color: #3d7fbd; }
.split { width: 25px; height: 15px; display: flex; background: #f2f3f4; border: 1px solid #d3d5d8; }
.split svg { height: 13px; }
.cut { flex: 1; display: flex; align-items: center; justify-content: center; border-left: 1px solid #d3d5d8; }
.tools { display: grid; grid-template-columns: 50px 49px 52px 17px; row-gap: 2px; padding-left: 2px; align-content: start; }
.lrow { display: flex; justify-content: space-between; height: 15px; }
.lgroup { display: flex; }
.combo { position: relative; flex: 1; height: 15px; display: flex; align-items: center; gap: 1px; padding: 0 3px 0 1px; background: linear-gradient(#fff, #eceef0); border: 1px solid #c9cbce; }
.combo select { flex: 1; min-width: 0; appearance: none; border: 0; padding: 0; background: none; font: inherit; color: #333; }
.combo .short { flex: 0 0 36px; }
.swatch { width: 11px; height: 11px; flex: none; margin: 0 2px 0 1px; border: 1px solid #444; background: #fff; }
.rule { flex: 1; height: 1px; margin-left: 2px; background: #444; }
.prow { display: flex; gap: 1px; align-items: center; }
.launch { position: absolute; right: 3px; bottom: 3px; }

.view { position: relative; flex: 1; min-height: 0; background: #222933; border-left: 1px solid #9da1a5; border-right: 2px solid #777b80; overflow: hidden; }
.model { position: absolute; inset: 0; width: 100%; height: 100%; }
.cad { fill: none; stroke: #c9ced3; stroke-width: 1; }
.shade { fill: #666d75; }
.marks { stroke-width: 3; stroke-dasharray: 2 1 1 1 9 1; }
.blob { stroke: #fff; stroke-width: 4; }
.caption { font: 800 7px Inter, sans-serif; fill: #fff; text-anchor: middle; }
.tags { font: 900 5px Lato, sans-serif; fill: #fff; text-anchor: middle; }
.viewlabel { position: absolute; left: 3px; top: 5px; color: #d4d7da; }
.right { position: absolute; right: 0; top: 6px; display: flex; flex-direction: column; align-items: flex-end; }
.mdi { display: flex; gap: 6px; padding-right: 7px; }
.mdi path { fill: none; stroke: #eee; }
.cube { margin: 10px 9px 0 0; }
.cube text { text-anchor: middle; }
.top { font: bold 6px "Open Sans", sans-serif; fill: #4f5660; }
.dir { font: bold 11px "Liberation Sans", sans-serif; fill: #c3c6ca; }
.wcs { display: flex; align-items: center; gap: 4px; width: 34px; height: 12px; margin: 8px 28px 0 0; padding: 0 3px; border-radius: 3px; background: #9a9fab; border: 1px solid #adb1bb; color: #e0e2e6; }
.navbar { margin: 18px 2px 0 0; }
.cmd { position: absolute; left: 193px; right: 191px; bottom: 0; }
.history { display: flex; flex-direction: column; align-items: flex-start; gap: 3px; margin: 0 0 2px 215px; font: 8px/11px "DejaVu Sans Mono", "Liberation Mono", monospace; color: #a8abae; }
.history p { margin: 0; padding: 0 2px; background: #4d5155; white-space: nowrap; }
.history .lit { color: #dcdee0; }
.cmdline { display: flex; height: 17px; }
.grip { display: flex; align-items: center; gap: 6px; width: 38px; padding-left: 2px; background: linear-gradient(#606060, #3c3c3c); }
.entry { flex: 1; display: flex; align-items: center; gap: 5px; padding: 0 3px; background: #bcbdc0; }
.entry input { flex: 1; min-width: 0; border: 0; padding: 0; background: none; font: italic 8px "DejaVu Sans Mono", monospace; color: #333; }
.entry input::placeholder { color: #6c6e72; opacity: 1; }
.up { border: 3px solid transparent; border-bottom: 3px solid #333; border-top: 0; }

.sheets { flex: none; height: 12px; display: flex; align-items: stretch; background: #f0f0f0; padding-left: 1px; font-family: "Liberation Sans", sans-serif; }
.step { width: 11px; display: flex; align-items: center; justify-content: center; border-right: 1px solid #ccc; }
.sheet { padding: 0 5px; line-height: 12px; color: #222; position: relative; }
.sheet + .sheet::after { content: ""; position: absolute; right: 0; top: 1px; height: 10px; border-right: 1px solid #555; transform: skewX(-24deg); }
.sheet.on { background: #222933; color: #fff; clip-path: polygon(0 0, 100% 0, calc(100% - 4px) 100%, 4px 100%); padding: 0 7px; }

.status { flex: none; height: 17px; display: flex; align-items: center; border-top: 1px solid #555; background: linear-gradient(#a2a2a2, #777); }
.coords { width: 126px; padding-left: 9px; font-family: "Liberation Sans", sans-serif; color: #a2a2a2; white-space: nowrap; }
.toggles { display: flex; width: 231px; }
.toggles .tog { flex: 1; }
.tog { flex: none; min-width: 15px; height: 15px; display: flex; align-items: center; justify-content: center; background: linear-gradient(#bcbcbc, #999); border-right: 1px solid #777; color: #222; }
.tog.lit { background: linear-gradient(#d5eef4, #93c6d4); }
.tog.slim { min-width: 11px; }
.tray { margin-left: auto; display: flex; }
.model-btn { padding: 0 2px; }
.sep { width: 8px; background: #777; }
.ratio { gap: 1px; padding: 0 1px; }
.pair { display: flex; align-items: center; gap: 2px; padding: 0 2px; background: #707070; }
</style>
